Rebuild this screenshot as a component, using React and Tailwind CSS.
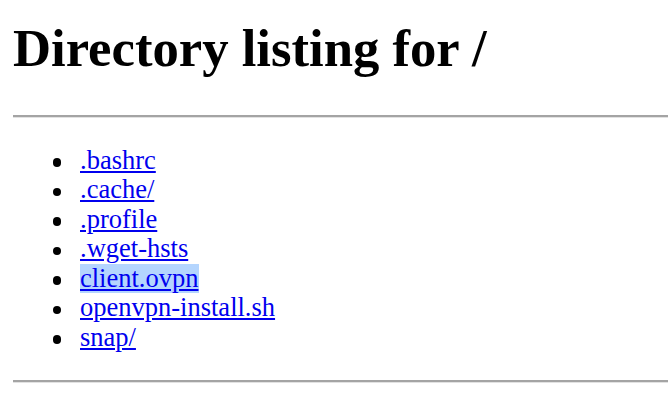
import React from "react";

const items = [".bashrc", ".cache/", ".profile", ".wget-hsts", "client.ovpn", "openvpn-install.sh", "snap/"];

export default function App() {
  return (
    <div className="font-['Liberation_Serif',serif] bg-white text-black pl-[13px] pt-[18px] min-h-[410px] overflow-hidden">
      <h1 className="text-[52.7px] font-bold leading-[60px] whitespace-nowrap">Directory listing for /</h1>
      <div className="mt-[37px] border-t-2 border-t-[#a4a4a4] border-b border-b-[#e2e2e2]" />
      <ul className="mt-[27.5px] text-[26.5px] leading-[29.5px]">
        {items.map((it) => (
          <li key={it} className="flex items-center">
            <span className="ml-[39.5px] mr-[19px] mt-[4px] w-[8.5px] h-[8.5px] rounded-full bg-black shrink-0" />
            <a
              href="#"
              className={
                "text-[#0000ee] underline " + (it === "client.ovpn" ? "bg-[#b4d5fe]" : "")
              }
            >
              {it}
            </a>
          </li>
        ))}
      </ul>
      <div className="mt-[28px] border-t-2 border-t-[#a4a4a4] border-b border-b-[#e2e2e2]" />
    </div>
  );
}
